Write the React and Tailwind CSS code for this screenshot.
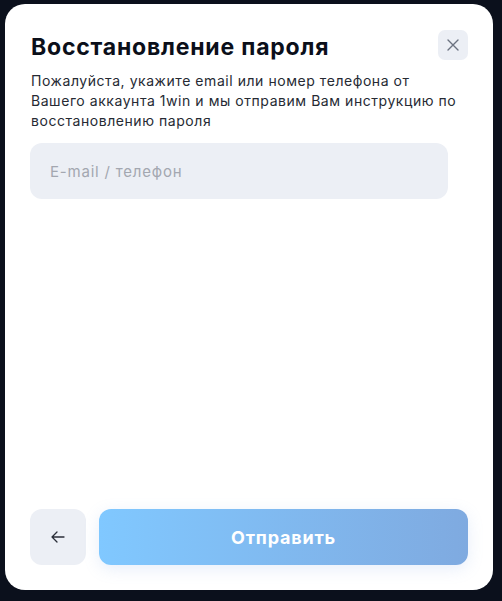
export default function App() {
  return (
    <div
      className="flex h-[601px] w-[502px] items-start bg-[#0b101c] pl-[5px] pt-[4px] tracking-[0.05em]"
      style={{ fontFamily: 'Inter, "Noto Sans", sans-serif' }}
    >
      <div className="flex h-[586px] w-[488px] flex-col rounded-[20px] bg-white px-[25px] pb-[25px] pt-[26px]">
        <div className="flex items-start justify-between">
          <h2 className="pl-[1px] pt-[3px] text-[23px] font-bold leading-[28px] text-[#0b0f1a]">
            Восстановление пароля
          </h2>
          <button className="flex h-[30px] w-[30px] items-center justify-center rounded-[7px] bg-[#eceff5] text-[#6b7280]">
            <svg width="12" height="12" viewBox="0 0 12 12" fill="none" stroke="currentColor" strokeWidth="1.4" strokeLinecap="round">
              <path d="M1 1l10 10M11 1L1 11" />
            </svg>
          </button>
        </div>
        <p className="mt-[10px] pl-[1px] text-[14px] leading-[20px] tracking-[0.55px] text-[#262a33]">
          Пожалуйста, укажите email или номер телефона от
          <br />
          Вашего аккаунта 1win и мы отправим Вам инструкцию по восстановлению пароля
        </p>
        <input
          type="text"
          placeholder="E-mail / телефон"
          className="mt-[12px] h-[56px] w-[418px] rounded-[12px] bg-[#eceff5] px-[20px] text-[15px] text-[#0b0f1a] outline-none placeholder:text-[#a3a7b0]"
        />
        <div className="mt-auto flex gap-[13px]">
          <button className="flex h-[56px] w-[56px] items-center justify-center rounded-[12px] bg-[#eceff5] text-[#2a2e38]">
            <svg width="14" height="12" viewBox="0 0 14 12" fill="none" stroke="currentColor" strokeWidth="1.3" strokeLinecap="round" strokeLinejoin="round">
              <path d="M13 6H1M6 1L1 6l5 5" />
            </svg>
          </button>
          <button className="h-[56px] flex-1 rounded-[12px] bg-gradient-to-r from-[#80c8ff] to-[#7faae0] text-[18px] font-bold text-white shadow-[0_4px_16px_rgba(120,160,230,0.18)]">
            Отправить
          </button>
        </div>
      </div>
    </div>
  )
}
